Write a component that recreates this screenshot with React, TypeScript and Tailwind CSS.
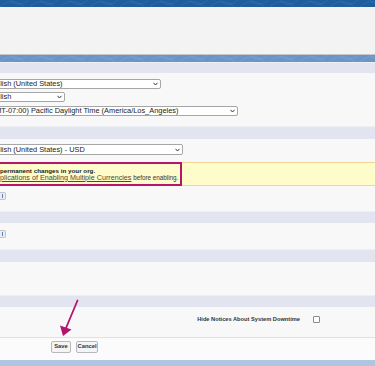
import React from "react";

const Chevron = () => (
  <svg width="5" height="4" viewBox="0 0 5 4" className="shrink-0">
    <path d="M0.5 0.8 L2.5 3 L4.5 0.8" fill="none" stroke="#333" strokeWidth="1" />
  </svg>
);

function Sel({ text, w, h = "h-[10px]" }: { text: string; w: string; h?: string }) {
  return (
    <div
      className={`${w} ${h} flex items-center justify-between bg-white border border-[#a6a6a6] rounded-[2px] pl-[2px] pr-[2px] overflow-hidden`}
    >
      <span className="text-[7.4px] leading-none text-[#222] whitespace-nowrap">{text}</span>
      <Chevron />
    </div>
  );
}

const Header = ({ h = "h-[12px]" }: { h?: string }) => (
  <div className={`${h} shrink-0 bg-[#e2e5ef] border-t border-[#edeff5]`} />
);

const PartialBtn = () => (
  <div className="w-[6px] h-[8px] bg-[#ececec] border border-l-0 border-[#c4c4c4] rounded-r-[2px] flex items-center justify-end pr-[2px]">
    <div className="w-[1px] h-[4px] bg-[#4a86c8]" />
  </div>
);

const Pattern = ({ color }: { color: string }) => (
  <svg width="375" height="7" viewBox="0 0 375 10" preserveAspectRatio="none" className="absolute left-0 top-0">
    {Array.from({ length: 14 }).map((_, i) => (
      <g key={i} fill="none" stroke={color} strokeWidth="0.6">
        <path d={`M${i * 30} 10 C ${i * 30 + 6} 0, ${i * 30 + 18} 0, ${i * 30 + 24} 10`} />
        <path d={`M${i * 30 + 10} 0 C ${i * 30 + 14} 8, ${i * 30 + 22} 8, ${i * 30 + 28} 0`} />
      </g>
    ))}
  </svg>
);

export default function App() {
  return (
    <div className="w-[375px] h-[366px] overflow-hidden bg-[#f8f8f8] font-['Liberation_Sans',Arial,sans-serif] flex flex-col">
      {/* top blue band + gray area */}
      <div className="relative h-[55px] shrink-0 bg-[#f3f3f3] border-t-[7px] border-t-[#1f5e9e] border-b border-b-[#c8c8c8]">
        <div className="absolute left-0 -top-[7px] w-[375px] h-[7px] overflow-hidden">
          <Pattern color="#3a74b0" />
        </div>
      </div>
      {/* light blue band */}
      <div className="relative h-[7px] bg-[#6a95c6] shrink-0 overflow-hidden">
        <Pattern color="#86a9d3" />
      </div>
      <Header h="h-[11px]" />

      {/* section 1 */}
      <div className="h-[53px] shrink-0 -ml-[16px] pt-[6px] flex flex-col gap-[3px]">
        <Sel text="English (United States)" w="w-[177px]" />
        <Sel text="English" w="w-[81px]" />
        <div className="mt-[1px]">
          <Sel text="(GMT-07:00) Pacific Daylight Time (America/Los_Angeles)" w="w-[254px]" />
        </div>
      </div>

      <Header h="h-[13px]" />

      {/* section 2 */}
      <div className="h-[72px] shrink-0 pt-[5px] flex flex-col">
        <div className="-ml-[16px]">
          <Sel text="English (United States) - USD" w="w-[199px]" h="h-[11px]" />
        </div>
        <div className="mt-[7px] h-[24px] bg-[#fefcca] border-y border-[#f3d493] flex">
          <div className="-my-px w-[182px] h-[24px] border-2 border-l-0 border-[#b5166a] flex flex-col justify-center leading-none">
            <div className="text-[6.25px] leading-[7px] font-bold text-[#222] whitespace-nowrap">
              permanent changes in your org.
            </div>
            <div className="text-[7.2px] leading-[8px] whitespace-nowrap text-[#333]">
              <span className="underline text-[#4a4a3a]">plications of Enabling Multiple Currencies</span>
              <span className="text-[6.3px]"> before enabling.</span>
            </div>
          </div>
        </div>
        <div className="mt-[6px]">
          <PartialBtn />
        </div>
      </div>

      <Header />

      {/* section 3 */}
      <div className="h-[26px] shrink-0 pt-[7px]">
        <PartialBtn />
      </div>

      <Header h="h-[13px]" />

      {/* section 4 */}
      <div className="h-[33px] shrink-0" />

      <Header />

      {/* row with checkbox */}
      <div className="relative h-[31px] shrink-0 border-b border-[#e2e2e2] flex items-start justify-end pt-[9px] pr-[55px]">
        <span className="text-[5.7px] font-bold text-[#333] leading-none mt-[1px] whitespace-nowrap">
          Hide Notices About System Downtime
        </span>
        <div className="ml-[13px] w-[7px] h-[7px] bg-white border border-[#8a8a8a] rounded-[1px]" />
        {/* annotation arrow */}
        <svg className="absolute left-[55px] top-[-8px]" width="30" height="40" viewBox="55 299 30 40">
          <path d="M77.5 300.5 L66 328" stroke="#b5146c" strokeWidth="1.8" fill="none" strokeLinecap="round" />
          <path d="M63 336 L60 325.5 L71.5 329.5 Z" fill="#b5146c" />
        </svg>
      </div>

      {/* buttons row */}
      <div className="h-[22px] shrink-0 bg-[#fbfbfb] flex items-start pt-[3px] pl-[51px] gap-[5px]">
        <button className="h-[12px] w-[20px] bg-[#f4f4f4] border border-[#b8b8b8] rounded-[2px] text-[5.8px] font-bold text-[#333] leading-none flex items-center justify-center">
          Save
        </button>
        <button className="h-[12px] w-[22px] bg-[#f4f4f4] border border-[#b8b8b8] rounded-[2px] text-[5.8px] font-bold text-[#333] leading-none flex items-center justify-center">
          Cancel
        </button>
      </div>

      <div className="flex-1 bg-[#b0c5df]" />
    </div>
  );
}
